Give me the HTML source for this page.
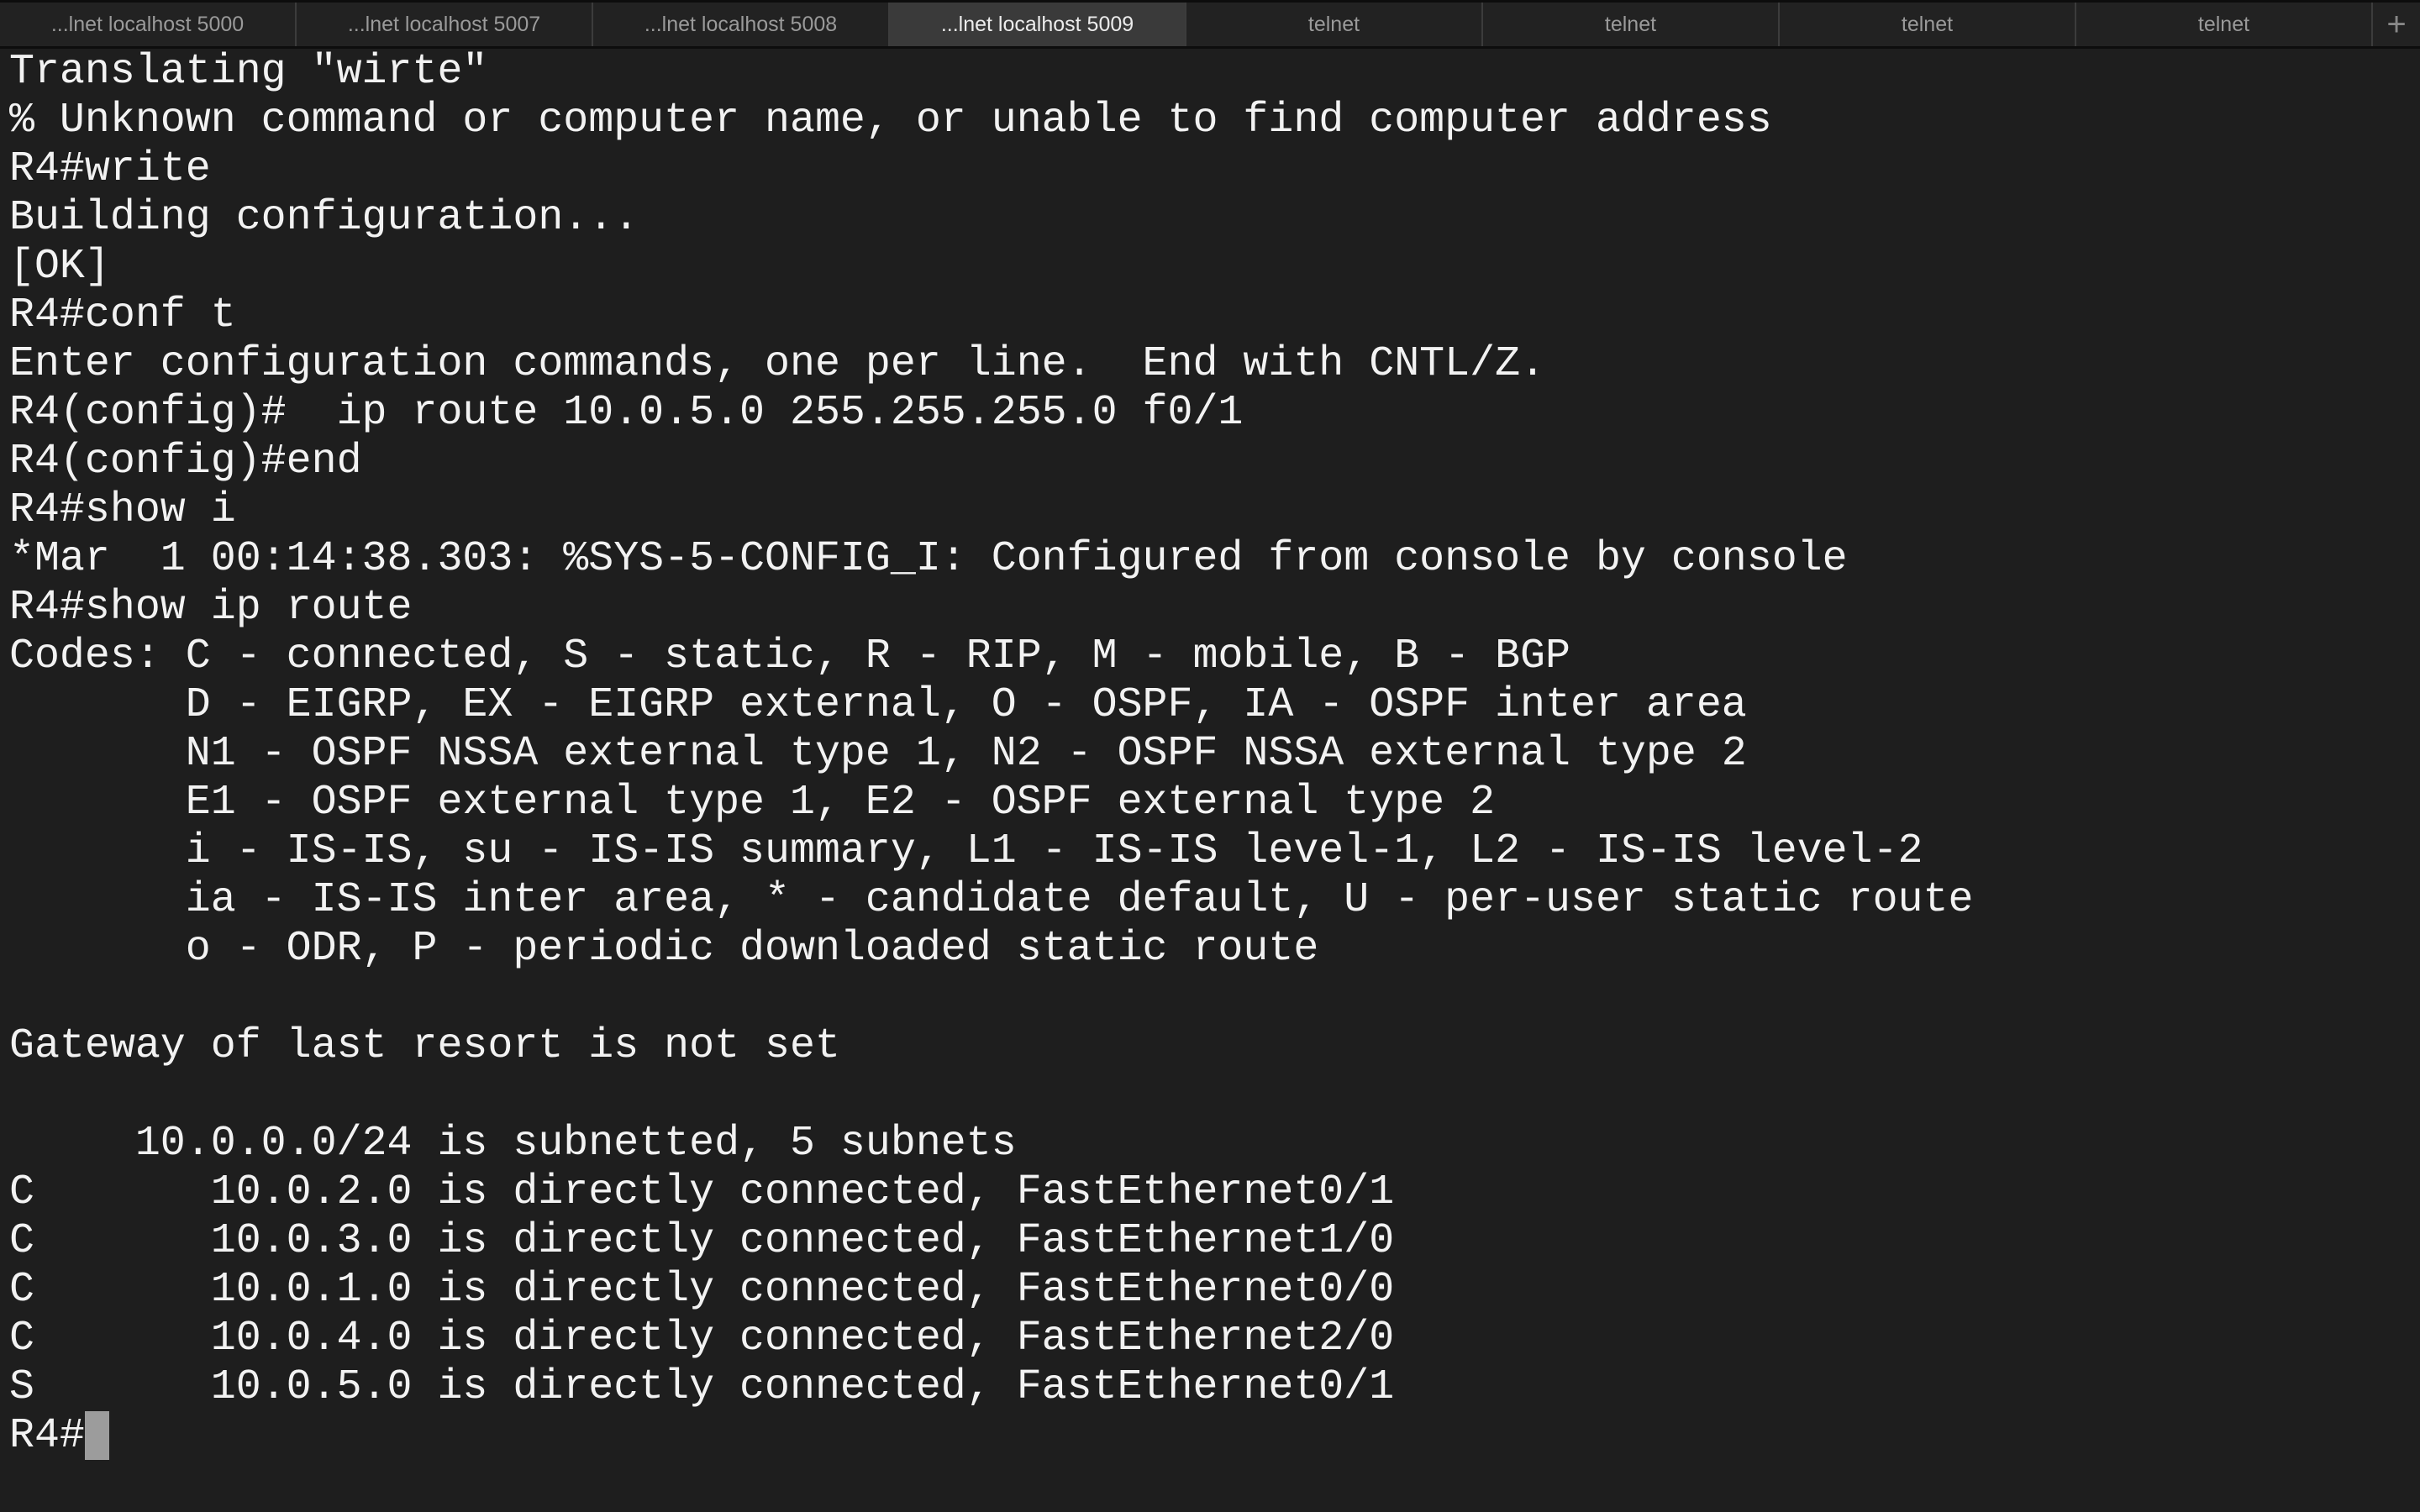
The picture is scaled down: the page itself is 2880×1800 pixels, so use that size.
<!DOCTYPE html>
<html><head><meta charset="utf-8"><style>
html,body{margin:0;padding:0;background:#1e1e1e;width:2880px;height:1800px;overflow:hidden}
#tabs{position:absolute;left:0;top:0;width:2880px;height:52px;background:#222;border-top:3px solid #0d0d0d;border-bottom:3px solid #0d0d0d;display:flex}
.t{width:353px;flex:none;height:52px;box-sizing:border-box;border-right:2px solid #3c3c3c;color:#9a9a9a;font:25px "Liberation Sans",sans-serif;display:flex;align-items:center;justify-content:center}
.t.a{background:#3a3a3a;color:#ececec}
.plus{flex:1;color:#888;font:40px "Liberation Sans",sans-serif;display:flex;align-items:center;justify-content:center}
pre{position:absolute;left:11px;top:56px;margin:0;font-family:"Liberation Mono","DejaVu Sans Mono",monospace;font-size:49.95px;line-height:58px;color:#f2f2f2;white-space:pre}
.cur{display:inline-block;width:29px;height:58px;background:#9c9c9c;vertical-align:top}
</style></head><body>
<div id="tabs">
<div class="t">...lnet localhost 5000</div>
<div class="t">...lnet localhost 5007</div>
<div class="t">...lnet localhost 5008</div>
<div class="t a">...lnet localhost 5009</div>
<div class="t">telnet</div>
<div class="t">telnet</div>
<div class="t">telnet</div>
<div class="t">telnet</div>
<div class="plus">+</div>
</div>
<pre>Translating "wirte"
% Unknown command or computer name, or unable to find computer address
R4#write
Building configuration...
[OK]
R4#conf t
Enter configuration commands, one per line.  End with CNTL/Z.
R4(config)#  ip route 10.0.5.0 255.255.255.0 f0/1
R4(config)#end
R4#show i
*Mar  1 00:14:38.303: %SYS-5-CONFIG_I: Configured from console by console
R4#show ip route
Codes: C - connected, S - static, R - RIP, M - mobile, B - BGP
       D - EIGRP, EX - EIGRP external, O - OSPF, IA - OSPF inter area
       N1 - OSPF NSSA external type 1, N2 - OSPF NSSA external type 2
       E1 - OSPF external type 1, E2 - OSPF external type 2
       i - IS-IS, su - IS-IS summary, L1 - IS-IS level-1, L2 - IS-IS level-2
       ia - IS-IS inter area, * - candidate default, U - per-user static route
       o - ODR, P - periodic downloaded static route

Gateway of last resort is not set

     10.0.0.0/24 is subnetted, 5 subnets
C       10.0.2.0 is directly connected, FastEthernet0/1
C       10.0.3.0 is directly connected, FastEthernet1/0
C       10.0.1.0 is directly connected, FastEthernet0/0
C       10.0.4.0 is directly connected, FastEthernet2/0
S       10.0.5.0 is directly connected, FastEthernet0/1
R4#<span class="cur"></span></pre>
</body></html>
